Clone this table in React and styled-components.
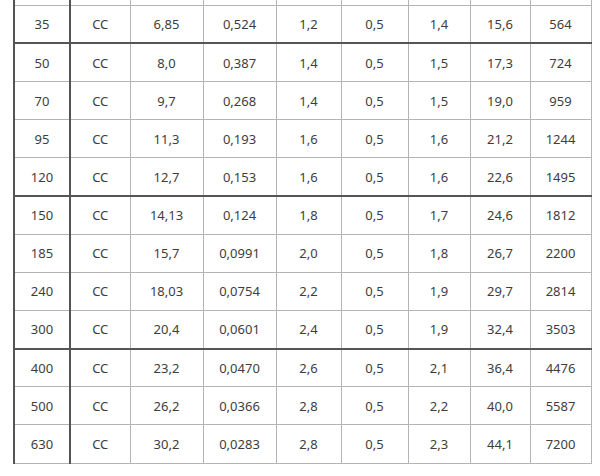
import React from 'react';
import styled, { createGlobalStyle } from 'styled-components';

const GlobalStyle = createGlobalStyle`
  html, body {
    margin: 0;
    padding: 0;
    background: #ffffff;
    overflow: hidden;
  }
  body {
    font-family: "Noto Sans", "Open Sans", "Liberation Sans", sans-serif;
  }
`;

const Page = styled.div`
  width: 600px;
  height: 476px;
  overflow: hidden;
  padding-left: 13px;
  box-sizing: border-box;
`;

const Table = styled.table`
  border-collapse: collapse;
  table-layout: fixed;
  width: 577px;
  margin-top: -33px;
  color: #3d3d3d;
  font-size: 13px;
  border-left: 2px solid #555;
`;

const Row = styled.tr`
  height: 38.17px;
  border-bottom: ${p => (p.$heavy ? '2px solid #555' : '1px solid #b4b4b4')};
`;

const Cell = styled.td`
  padding: 0;
  text-align: center;
  vertical-align: middle;
  border-right: ${p => (p.$heavy ? '2px solid #555' : '1px solid #b4b4b4')};
  line-height: 18px;
`;

const widths = [56, 60, 73, 73, 65, 67, 62, 60, 61];

// first row sits above the visible area; only its cell borders show
const rows = [
  ['', '', '', '', '', '', '', '', ''],
  ['35', 'CC', '6,85', '0,524', '1,2', '0,5', '1,4', '15,6', '564'],
  ['50', 'CC', '8,0', '0,387', '1,4', '0,5', '1,5', '17,3', '724'],
  ['70', 'CC', '9,7', '0,268', '1,4', '0,5', '1,5', '19,0', '959'],
  ['95', 'CC', '11,3', '0,193', '1,6', '0,5', '1,6', '21,2', '1244'],
  ['120', 'CC', '12,7', '0,153', '1,6', '0,5', '1,6', '22,6', '1495'],
  ['150', 'CC', '14,13', '0,124', '1,8', '0,5', '1,7', '24,6', '1812'],
  ['185', 'CC', '15,7', '0,0991', '2,0', '0,5', '1,8', '26,7', '2200'],
  ['240', 'CC', '18,03', '0,0754', '2,2', '0,5', '1,9', '29,7', '2814'],
  ['300', 'CC', '20,4', '0,0601', '2,4', '0,5', '1,9', '32,4', '3503'],
  ['400', 'CC', '23,2', '0,0470', '2,6', '0,5', '2,1', '36,4', '4476'],
  ['500', 'CC', '26,2', '0,0366', '2,8', '0,5', '2,2', '40,0', '5587'],
  ['630', 'CC', '30,2', '0,0283', '2,8', '0,5', '2,3', '44,1', '7200'],
];

const heavyAfter = ['35', '120', '300'];

export default function App() {
  return (
    <Page>
      <GlobalStyle />
      <Table>
        <colgroup>
          {widths.map((w, i) => (
            <col key={i} style={{ width: w }} />
          ))}
        </colgroup>
        <tbody>
          {rows.map((r, idx) => (
            <Row key={idx} $heavy={heavyAfter.includes(r[0])}>
              {r.map((v, i) => (
                <Cell key={i} $heavy={i === 0}>{v}</Cell>
              ))}
            </Row>
          ))}
        </tbody>
      </Table>
    </Page>
  );
}
